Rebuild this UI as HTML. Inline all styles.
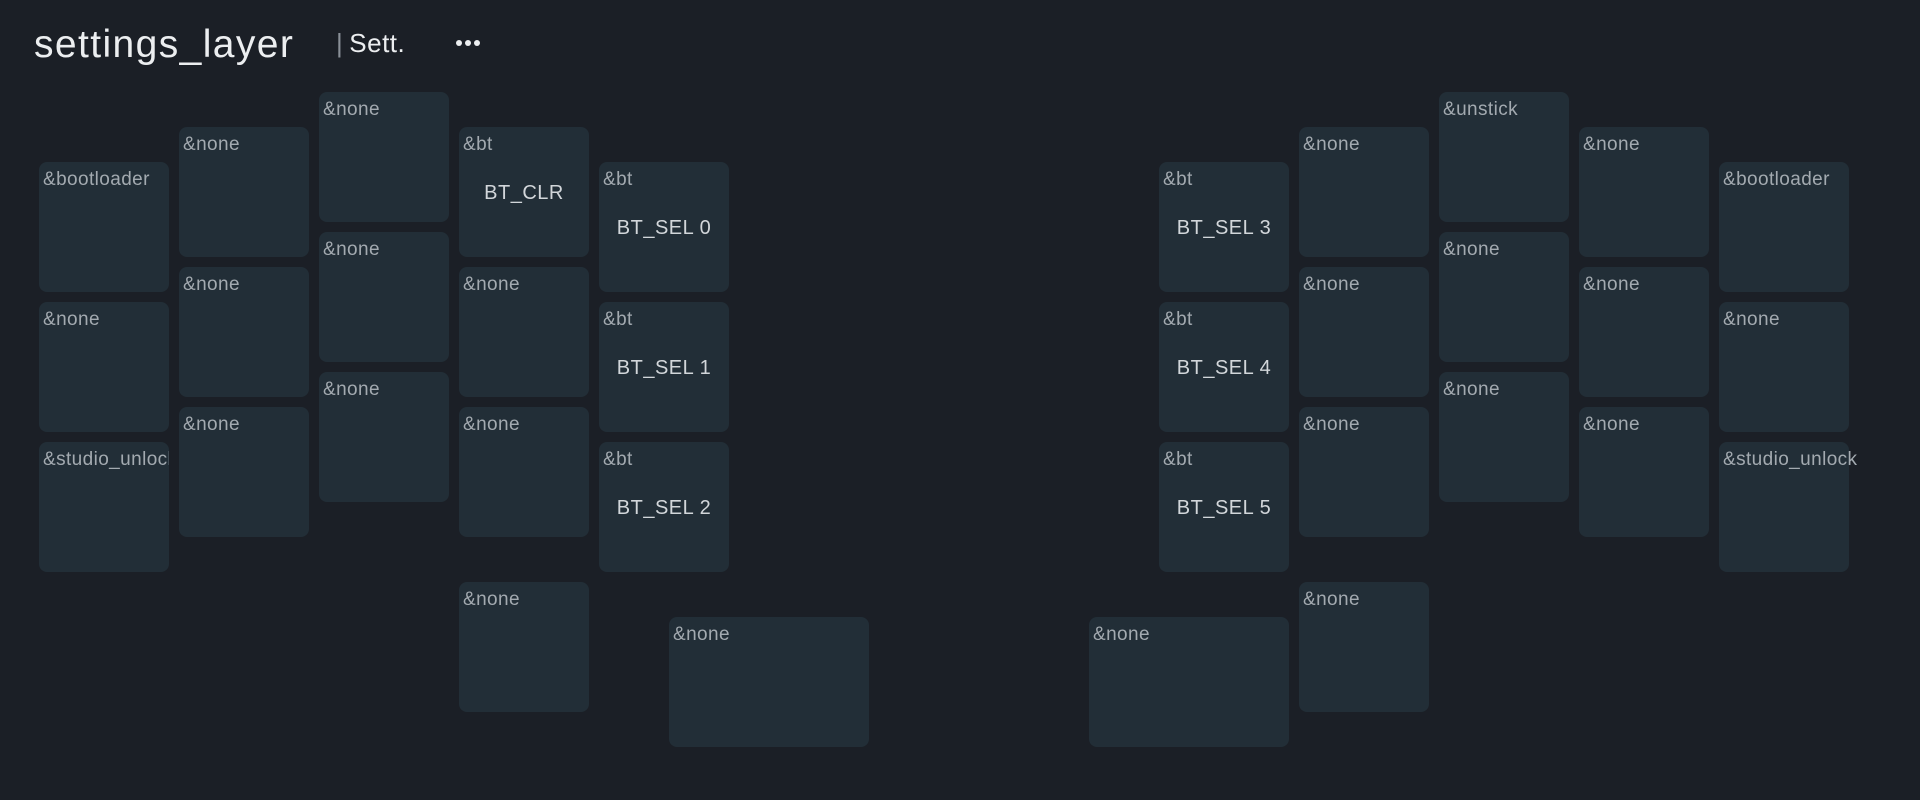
<!DOCTYPE html>
<html><head><meta charset="utf-8"><style>
html,body{margin:0;padding:0}
body{width:1920px;height:800px;background:#1b1f26;position:relative;overflow:hidden;font-family:"Liberation Sans",sans-serif}
.t{position:absolute;left:34px;top:23px;font-size:39px;color:#eceef0;letter-spacing:1.4px}
.s{position:absolute;left:336px;top:28px;font-size:26px;color:#eceef0;letter-spacing:0.5px}
.s b{font-weight:normal;color:#8a9098;margin-right:6px}
.dots{position:absolute;left:456px;top:40px}
.dots div{position:absolute;top:0;width:6px;height:6px;border-radius:50%;background:#eceef0}
.k{position:absolute;width:130px;height:130px;background:#222e37;border-radius:8px}
.k span{position:absolute;left:4px;top:7px;font-size:19px;color:#a3aab0;white-space:nowrap;letter-spacing:0.4px}
.k i{position:absolute;left:0;right:0;top:55px;text-align:center;font-style:normal;font-size:20px;color:#d2d6da;letter-spacing:0.5px}
.w{width:200px}
</style></head><body>
<div class="t">settings_layer</div>
<div class="s"><b>|</b>Sett.</div>
<div class="dots"><div style="left:0"></div><div style="left:9px"></div><div style="left:18px"></div></div>

<div class="k" style="left:39px;top:162px"><span>&amp;bootloader</span></div>
<div class="k" style="left:39px;top:302px"><span>&amp;none</span></div>
<div class="k" style="left:39px;top:442px;overflow:hidden"><span>&amp;studio_unlock</span></div>
<div class="k" style="left:179px;top:127px"><span>&amp;none</span></div>
<div class="k" style="left:179px;top:267px"><span>&amp;none</span></div>
<div class="k" style="left:179px;top:407px"><span>&amp;none</span></div>
<div class="k" style="left:319px;top:92px"><span>&amp;none</span></div>
<div class="k" style="left:319px;top:232px"><span>&amp;none</span></div>
<div class="k" style="left:319px;top:372px"><span>&amp;none</span></div>
<div class="k" style="left:459px;top:127px"><span>&amp;bt</span><i>BT_CLR</i></div>
<div class="k" style="left:459px;top:267px"><span>&amp;none</span></div>
<div class="k" style="left:459px;top:407px"><span>&amp;none</span></div>
<div class="k" style="left:599px;top:162px"><span>&amp;bt</span><i>BT_SEL 0</i></div>
<div class="k" style="left:599px;top:302px"><span>&amp;bt</span><i>BT_SEL 1</i></div>
<div class="k" style="left:599px;top:442px"><span>&amp;bt</span><i>BT_SEL 2</i></div>
<div class="k" style="left:459px;top:582px"><span>&amp;none</span></div>
<div class="k w" style="left:669px;top:617px"><span>&amp;none</span></div>

<div class="k" style="left:1159px;top:162px"><span>&amp;bt</span><i>BT_SEL 3</i></div>
<div class="k" style="left:1159px;top:302px"><span>&amp;bt</span><i>BT_SEL 4</i></div>
<div class="k" style="left:1159px;top:442px"><span>&amp;bt</span><i>BT_SEL 5</i></div>
<div class="k" style="left:1299px;top:127px"><span>&amp;none</span></div>
<div class="k" style="left:1299px;top:267px"><span>&amp;none</span></div>
<div class="k" style="left:1299px;top:407px"><span>&amp;none</span></div>
<div class="k" style="left:1439px;top:92px"><span>&amp;unstick</span></div>
<div class="k" style="left:1439px;top:232px"><span>&amp;none</span></div>
<div class="k" style="left:1439px;top:372px"><span>&amp;none</span></div>
<div class="k" style="left:1579px;top:127px"><span>&amp;none</span></div>
<div class="k" style="left:1579px;top:267px"><span>&amp;none</span></div>
<div class="k" style="left:1579px;top:407px"><span>&amp;none</span></div>
<div class="k" style="left:1719px;top:162px"><span>&amp;bootloader</span></div>
<div class="k" style="left:1719px;top:302px"><span>&amp;none</span></div>
<div class="k" style="left:1719px;top:442px"><span>&amp;studio_unlock</span></div>
<div class="k w" style="left:1089px;top:617px"><span>&amp;none</span></div>
<div class="k" style="left:1299px;top:582px"><span>&amp;none</span></div>
</body></html>
